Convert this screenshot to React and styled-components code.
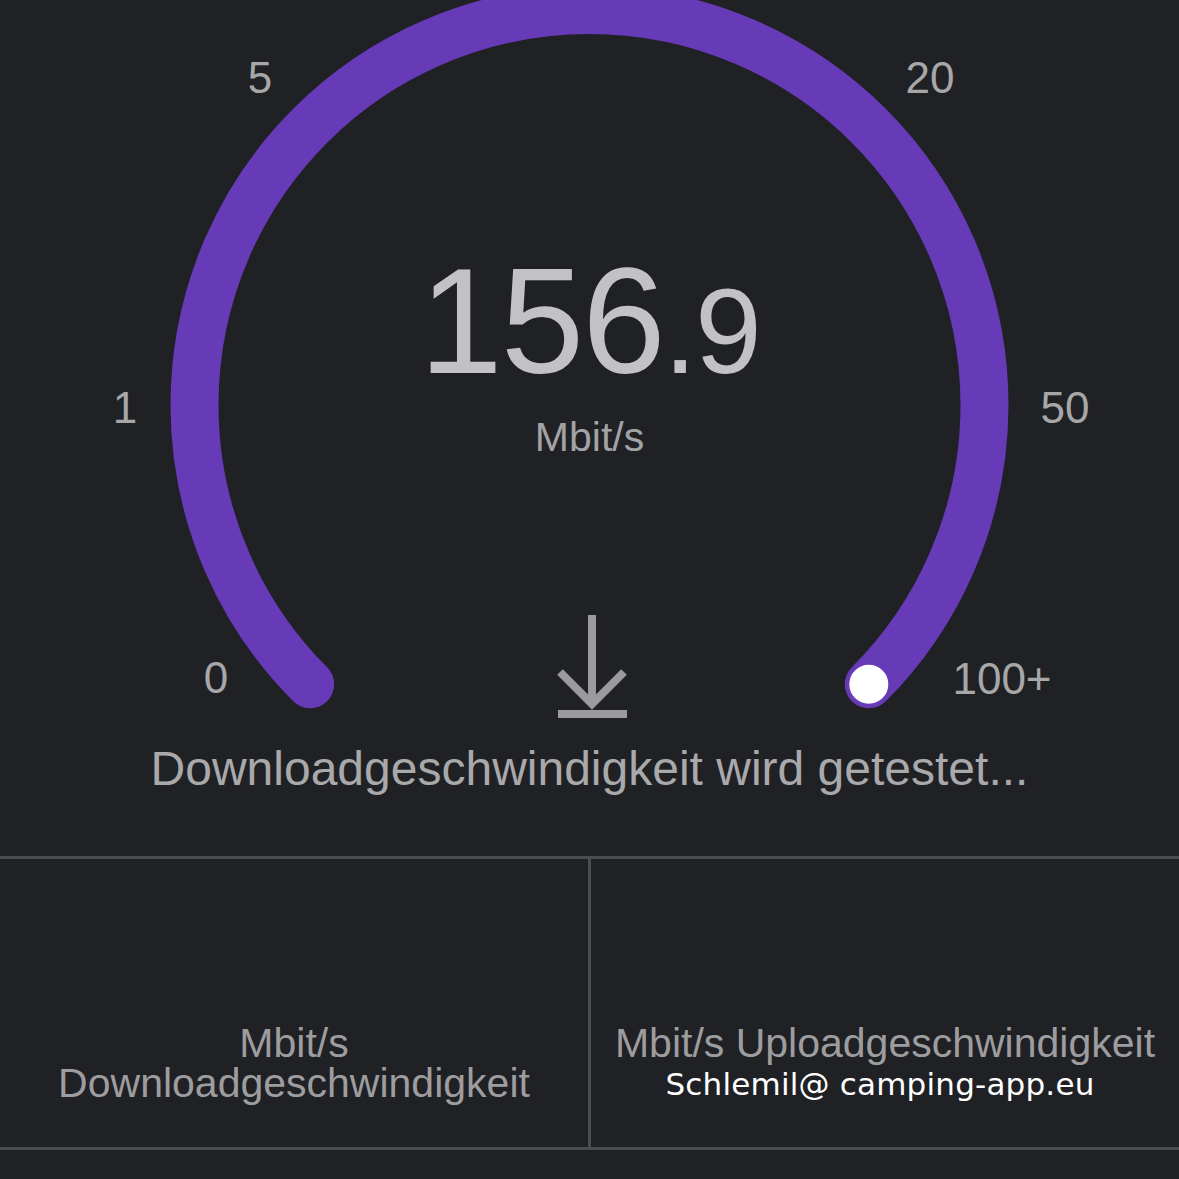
import styled, { createGlobalStyle } from 'styled-components'

const GlobalStyle = createGlobalStyle`
	html, body {
		margin: 0;
		padding: 0;
		background: #202125;
	}
	body {
		font-family: 'Liberation Sans', Arial, Helvetica, sans-serif;
	}
`;

const Page = styled("div")`
	width: 1179px;
	height: 1179px;
	overflow: hidden;
	background: #202125;
	display: flex;
	flex-direction: column;
`;

const Gauge = styled("div")`
	position: relative;
	height: 730px;
	display: flex;
	flex-direction: column;
	align-items: center;
`;

const Dial = styled("svg")`
	position: absolute;
	top: 0;
	left: 0;
`;

const Tick = styled("span")`
	position: absolute;
	transform: translate(-50%, -50%);
	font-size: 44px;
	line-height: 1;
	color: #a7a7a9;
	white-space: nowrap;
`;

const Reading = styled("div")`
	position: relative;
	margin-top: 246px;
	display: flex;
	align-items: baseline;
	color: #c2c2c4;
	line-height: 1;
	letter-spacing: -2px;
`;

const Whole = styled("span")`
	font-size: 150px;
`;

const Fraction = styled("span")`
	font-size: 120px;
`;

const Unit = styled("div")`
	position: relative;
	margin-top: 21px;
	font-size: 41px;
	line-height: 1;
	color: #a3a3a5;
`;

const DownloadIcon = styled("svg")`
	position: relative;
	margin-top: 153px;
	margin-left: 5px;
`;

const Status = styled("div")`
	margin-top: 15px;
	text-align: center;
	font-size: 48px;
	line-height: 1;
	color: #a9a9ab;
`;

const Results = styled("div")`
	margin-top: 63px;
	display: grid;
	grid-template-columns: 588px 3px 1fr;
	height: 288px;
	border-top: 3px solid #4b4c50;
	border-bottom: 3px solid #4b4c50;
`;

const Divider = styled("div")`
	background: #4b4c50;
`;

const Cell = styled("div")`
	display: flex;
	flex-direction: column;
	align-items: center;
	padding-top: 164px;
	text-align: center;
	font-size: 41px;
	line-height: 40px;
	color: #9d9d9f;
`;

const Watermark = styled("div")`
	font-family: 'DejaVu Sans', 'Lato', sans-serif;
	font-size: 31px;
	line-height: 39px;
	margin-top: 2px;
	color: #ffffff;
	margin-left: -10px;
	letter-spacing: 0.2px;
`;

const ticks = [
	{ label: "5", x: 260, y: 78 },
	{ label: "20", x: 930, y: 78 },
	{ label: "1", x: 125, y: 408 },
	{ label: "50", x: 1065, y: 408 },
	{ label: "0", x: 216, y: 678 },
	{ label: "100+", x: 1002, y: 679 },
];

const cx = 589.5;
const cy = 405;
const r = 395;

// arc runs 270 degrees, from lower left clockwise to lower right
const polar = (deg) => {
	const a = (deg * Math.PI) / 180;
	return [cx + r * Math.sin(a), cy - r * Math.cos(a)];
};

const [sx, sy] = polar(-135);
const [ex, ey] = polar(135);
const arcPath = `M ${sx} ${sy} A ${r} ${r} 0 1 1 ${ex} ${ey}`;

const App = () => {
	return (
		<Page>
			<GlobalStyle />
			<Gauge>
				<Dial width="1179" height="730" viewBox="0 0 1179 730">
					<path
						d={arcPath}
						fill="none"
						stroke="#673ab7"
						strokeWidth="48"
						strokeLinecap="round"
					/>
					<circle cx={ex} cy={ey} r="21" fill="#ffffff" stroke="#673ab7" strokeWidth="3" />
				</Dial>
				{ticks.map(t => (
					<Tick key={t.label} style={{ left: t.x, top: t.y }}>{t.label}</Tick>
				))}
				<Reading>
					<Whole>156</Whole>
					<Fraction>.9</Fraction>
				</Reading>
				<Unit>Mbit/s</Unit>
				<DownloadIcon width="80" height="108" viewBox="0 0 80 108">
					<line x1="40" y1="4" x2="40" y2="92" stroke="#9b9b9d" strokeWidth="8" />
					<polyline points="8,61 40,93 72,61" fill="none" stroke="#9b9b9d" strokeWidth="8" />
					<line x1="6" y1="103" x2="75" y2="103" stroke="#9b9b9d" strokeWidth="8" />
				</DownloadIcon>
			</Gauge>
			<Status>Downloadgeschwindigkeit wird getestet...</Status>
			<Results>
				<Cell>
					<div>Mbit/s</div>
					<div>Downloadgeschwindigkeit</div>
				</Cell>
				<Divider />
				<Cell>
					<div>Mbit/s Uploadgeschwindigkeit</div>
					<Watermark>Schlemil@ camping-app.eu</Watermark>
				</Cell>
			</Results>
		</Page>
	)
}

export default App;
